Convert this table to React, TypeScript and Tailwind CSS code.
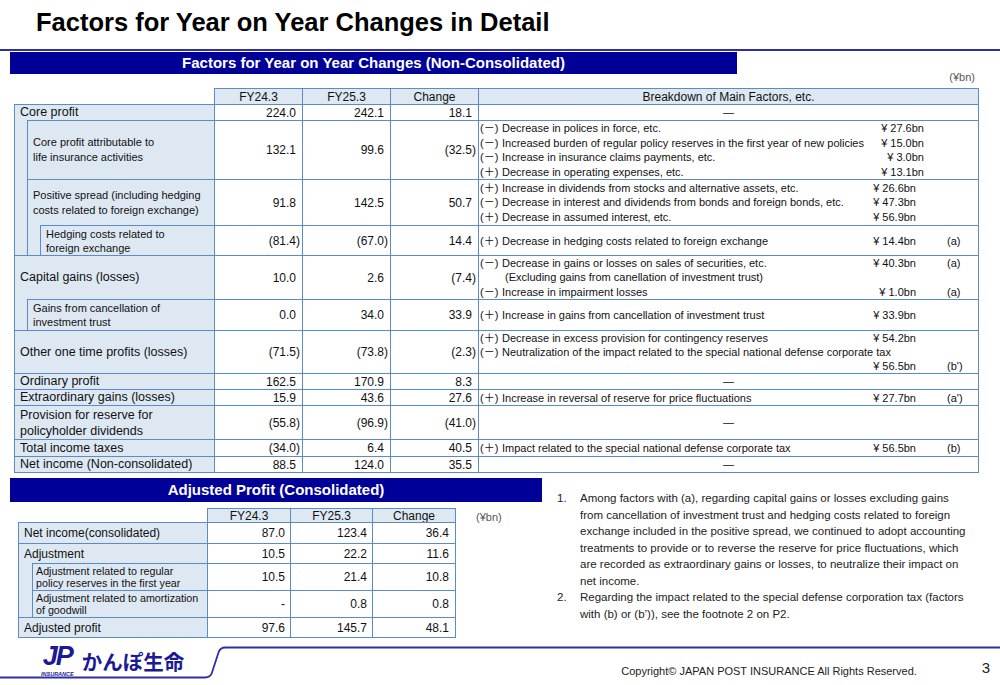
import React from "react";

type Line = { t?: string; sign?: "+" | "-"; amt?: string; mark?: string; indent?: boolean; full?: boolean };
type Row = { h: string; v: [string, string, string]; lines?: Line[]; lh?: string; last?: boolean };

const rows: Row[] = [
  { h: "h-[16px]", v: ["224.0", "242.1", "18.1"] },
  {
    h: "h-[59px]",
    v: ["132.1", "99.6", "(32.5)"],
    lh: "leading-[14.5px]",
    lines: [
      { sign: "-", t: "Decrease in polices in force, etc.", amt: "¥ 27.6bn" },
      { sign: "-", t: "Increased burden of regular policy reserves in the first year of new policies", amt: "¥ 15.0bn" },
      { sign: "-", t: "Increase in insurance claims payments, etc.", amt: "¥ 3.0bn" },
      { sign: "+", t: "Decrease in operating expenses, etc.", amt: "¥ 13.1bn" },
    ],
  },
  {
    h: "h-[46px]",
    v: ["91.8", "142.5", "50.7"],
    lh: "leading-[14.5px]",
    lines: [
      { sign: "+", t: "Increase in dividends from stocks and alternative assets, etc.", amt: "¥ 26.6bn" },
      { sign: "-", t: "Decrease in interest and dividends from bonds and foreign bonds, etc.", amt: "¥ 47.3bn" },
      { sign: "+", t: "Decrease in assumed interest, etc.", amt: "¥ 56.9bn" },
    ],
  },
  {
    h: "h-[30px]",
    v: ["(81.4)", "(67.0)", "14.4"],
    lines: [{ sign: "+", t: "Decrease in hedging costs related to foreign exchange", amt: "¥ 14.4bn", mark: "(a)" }],
  },
  {
    h: "h-[44px]",
    v: ["10.0", "2.6", "(7.4)"],
    lh: "leading-[14.5px]",
    lines: [
      { sign: "-", t: "Decrease in gains or losses on sales of securities, etc.", amt: "¥ 40.3bn", mark: "(a)" },
      { t: "(Excluding gains from canellation of investment trust)", indent: true },
      { sign: "-", t: "Increase in impairment losses", amt: "¥ 1.0bn", mark: "(a)" },
    ],
  },
  {
    h: "h-[31px]",
    v: ["0.0", "34.0", "33.9"],
    lines: [{ sign: "+", t: "Increase in gains from cancellation of investment trust", amt: "¥ 33.9bn" }],
  },
  {
    h: "h-[43px]",
    v: ["(71.5)", "(73.8)", "(2.3)"],
    lh: "leading-[14px]",
    lines: [
      { sign: "+", t: "Decrease in excess provision for contingency reserves", amt: "¥ 54.2bn" },
      { sign: "-", t: "Neutralization of the impact related to the special national defense corporate tax", full: true },
      { t: "", amt: "¥ 56.5bn", mark: "(b')" },
    ],
  },
  { h: "h-[16px]", v: ["162.5", "170.9", "8.3"] },
  {
    h: "h-[16px]",
    v: ["15.9", "43.6", "27.6"],
    lines: [{ sign: "+", t: "Increase in reversal of reserve for price fluctuations", amt: "¥ 27.7bn", mark: "(a')" }],
  },
  { h: "h-[34px]", v: ["(55.8)", "(96.9)", "(41.0)"] },
  {
    h: "h-[17px]",
    v: ["(34.0)", "6.4", "40.5"],
    lines: [{ sign: "+", t: "Impact related to the special national defense corporate tax", amt: "¥ 56.5bn", mark: "(b)" }],
  },
  { h: "h-[17px]", v: ["88.5", "124.0", "35.5"], last: true },
];

const Num = ({ v }: { v: string }) =>
  v.startsWith("(") ? (
    <>{v}</>
  ) : (
    <>
      {v}
      <span className="invisible">)</span>
    </>
  );

const Sign = ({ s }: { s?: "+" | "-" }) =>
  s ? <span className="inline-block w-[22px]">{s === "+" ? "(＋)" : "(－)"}</span> : null;

const Breakdown = ({ r }: { r: Row }) => {
  if (!r.lines) {
    return <div className="flex-1 flex items-center justify-center text-[11px]">—</div>;
  }
  return (
    <div className={`flex-1 flex flex-col justify-center pl-[1px] text-[11px] ${r.lh ?? "leading-[14px]"}`}>
      {r.lines.map((l, i) =>
        l.full ? (
          <div key={i} className="whitespace-nowrap">
            <Sign s={l.sign} />
            {l.t}
          </div>
        ) : (
          <div key={i} className="flex">
            <span className={`flex-1 min-w-0 whitespace-nowrap ${l.indent ? "pl-[25px]" : ""}`}>
              <Sign s={l.sign} />
              {l.t}
            </span>
            <span className="w-[60px] shrink-0 text-right whitespace-nowrap">{l.amt}</span>
            <span className="w-[62px] shrink-0 pl-[31px]">{l.mark}</span>
          </div>
        )
      )}
    </div>
  );
};

const bd = "border-[#5b8bc8]";
const lbg = "bg-[#dde8f3]";

const MainTable = () => (
  <div className="flex ml-[14px] mt-[4px] text-[#111]">
    {/* label column */}
    <div className="w-[200px] shrink-0">
      <div className="h-[16px]" />
      <div className={`h-[151px] border-l border-t ${bd} ${lbg} flex flex-col`}>
        <div className="h-[15px] flex items-center pl-[5px] text-[12.5px]">Core profit</div>
        <div className="flex flex-1">
          <div className="w-[12px]" />
          <div className="flex-1 flex flex-col">
            <div className={`h-[59px] border-l border-t ${bd} flex items-center pl-[5px] text-[11px] leading-[15px]`}>
              Core profit attributable to
              <br />
              life insurance activities
            </div>
            <div className={`h-[76px] border-l border-t ${bd} flex flex-col`}>
              <div className="h-[45px] flex items-center pl-[5px] text-[11px] leading-[15px]">
                Positive spread (including hedging
                <br />
                costs related to foreign exchange)
              </div>
              <div className="flex h-[30px]">
                <div className="w-[12px]" />
                <div className={`flex-1 border-l border-t ${bd} flex items-center pl-[5px] text-[11px] leading-[14px]`}>
                  Hedging costs related to
                  <br />
                  foreign exchange
                </div>
              </div>
            </div>
          </div>
        </div>
      </div>
      <div className={`h-[75px] border-l border-t ${bd} ${lbg} flex flex-col`}>
        <div className="h-[43px] flex items-center pl-[5px] text-[12.5px]">Capital gains (losses)</div>
        <div className="flex h-[31px]">
          <div className="w-[12px]" />
          <div className={`flex-1 border-l border-t ${bd} flex items-center pl-[5px] text-[11px] leading-[14px]`}>
            Gains from cancellation of
            <br />
            investment trust
          </div>
        </div>
      </div>
      <div className={`h-[43px] border-l border-t ${bd} ${lbg} flex items-center pl-[5px] text-[12.5px]`}>
        Other one time profits (losses)
      </div>
      <div className={`h-[16px] border-l border-t ${bd} ${lbg} flex items-center pl-[5px] text-[12.5px]`}>Ordinary profit</div>
      <div className={`h-[16px] border-l border-t ${bd} ${lbg} flex items-center pl-[5px] text-[12.5px]`}>
        Extraordinary gains (losses)
      </div>
      <div className={`h-[34px] border-l border-t ${bd} ${lbg} flex items-center pl-[5px] text-[12.5px] leading-[16px]`}>
        Provision for reserve for
        <br />
        policyholder dividends
      </div>
      <div className={`h-[17px] border-l border-t ${bd} ${lbg} flex items-center pl-[5px] text-[12.5px]`}>Total income taxes</div>
      <div className={`h-[17px] border-l border-t border-b ${bd} ${lbg} flex items-center pl-[5px] text-[12.5px]`}>
        Net income (Non-consolidated)
      </div>
    </div>

    {/* data columns */}
    <div className="flex flex-col">
      <div className={`flex h-[16px] ${lbg} text-[12px]`}>
        {["FY24.3", "FY25.3", "Change"].map((h) => (
          <div key={h} className={`w-[88px] border-l border-t ${bd} flex items-center justify-center`}>
            {h}
          </div>
        ))}
        <div className={`w-[501px] border-l border-t border-r ${bd} flex items-center justify-center`}>
          Breakdown of Main Factors, etc.
        </div>
      </div>
      {rows.map((r, i) => (
        <div key={i} className={`flex ${r.h}`}>
          {r.v.map((v, j) => (
            <div
              key={j}
              className={`w-[88px] border-l border-t ${r.last ? "border-b" : ""} ${bd} flex items-center justify-end pr-[2px] text-[12px]`}
            >
              <Num v={v} />
            </div>
          ))}
          <div className={`w-[501px] flex border-l border-t border-r ${r.last ? "border-b" : ""} ${bd}`}>
            <Breakdown r={r} />
          </div>
        </div>
      ))}
    </div>
  </div>
);

const adj = [
  { h: "h-[21px]", v: ["87.0", "123.4", "36.4"] },
  { h: "h-[20px]", v: ["10.5", "22.2", "11.6"] },
  { h: "h-[27px]", v: ["10.5", "21.4", "10.8"] },
  { h: "h-[27px]", v: ["-", "0.8", "0.8"] },
  { h: "h-[21px]", v: ["97.6", "145.7", "48.1"], last: true },
];

const AdjTable = () => (
  <div className="flex items-start mt-[6px] ml-[18px] text-[#111]">
    <div className="w-[189px] shrink-0">
      <div className="h-[14px]" />
      <div className={`h-[21px] border-l border-t ${bd} ${lbg} flex items-center pl-[5px] text-[12px]`}>
        Net income(consolidated)
      </div>
      <div className={`h-[74px] border-l border-t ${bd} ${lbg} flex flex-col`}>
        <div className="h-[19px] flex items-center pl-[5px] text-[12px]">Adjustment</div>
        <div className="flex flex-1">
          <div className="w-[13px]" />
          <div className="flex-1 flex flex-col">
            <div className={`h-[27px] border-l border-t ${bd} flex items-center pl-[3px] text-[10.7px] leading-[12px]`}>
              Adjustment related to regular
              <br />
              policy reserves in the first year
            </div>
            <div className={`h-[27px] border-l border-t ${bd} flex items-center pl-[3px] text-[10.7px] leading-[12px]`}>
              Adjustment related to amortization
              <br />
              of goodwill
            </div>
          </div>
        </div>
      </div>
      <div className={`h-[21px] border-l border-t border-b ${bd} ${lbg} flex items-center pl-[5px] text-[12px]`}>
        Adjusted profit
      </div>
    </div>
    <div className="flex flex-col">
      <div className={`flex h-[14px] ${lbg} text-[12px]`}>
        <div className={`w-[83px] border-l border-t ${bd} flex items-center justify-center`}>FY24.3</div>
        <div className={`w-[82px] border-l border-t ${bd} flex items-center justify-center`}>FY25.3</div>
        <div className={`w-[84px] border-l border-t border-r ${bd} flex items-center justify-center`}>Change</div>
      </div>
      {adj.map((r, i) => (
        <div key={i} className={`flex ${r.h} text-[12px]`}>
          <div className={`w-[83px] border-l border-t ${r.last ? "border-b" : ""} ${bd} flex items-center justify-end pr-[5px]`}>
            {r.v[0]}
          </div>
          <div className={`w-[82px] border-l border-t ${r.last ? "border-b" : ""} ${bd} flex items-center justify-end pr-[5px]`}>
            {r.v[1]}
          </div>
          <div
            className={`w-[84px] border-l border-t border-r ${r.last ? "border-b" : ""} ${bd} flex items-center justify-end pr-[6px]`}
          >
            {r.v[2]}
          </div>
        </div>
      ))}
    </div>
    <div className="ml-[20px] mt-[1px] text-[11px] text-[#555]">(¥bn)</div>
  </div>
);

const Notes = () => (
  <div className="ml-[15px] pt-[12px] text-[11.5px] leading-[16.5px] text-[#222]">
    <div className="flex">
      <span className="w-[23px]">1.</span>
      <span className="whitespace-nowrap">
        Among factors with (a), regarding capital gains or losses excluding gains
        <br />
        from cancellation of investment trust and hedging costs related to foreign
        <br />
        exchange included in the positive spread, we continued to adopt accounting
        <br />
        treatments to provide or to reverse the reserve for price fluctuations, which
        <br />
        are recorded as extraordinary gains or losses, to neutralize their impact on
        <br />
        net income.
      </span>
    </div>
    <div className="flex">
      <span className="w-[23px]">2.</span>
      <span className="whitespace-nowrap">
        Regarding the impact related to the special defense corporation tax (factors
        <br />
        with (b) or (b’)), see the footnote 2 on P2.
      </span>
    </div>
  </div>
);

const Footer = () => (
  <div className="relative h-[47px] flex items-start">
    <svg className="absolute inset-0" width="1000" height="47" viewBox="0 0 1000 47">
      <path
        d="M0 34.5 H205 Q210.5 34.5 212 29.5 L218.5 9.5 Q220 4.5 225.5 4.5 H1000"
        fill="none"
        stroke="#2e2ea6"
        strokeWidth="1.8"
      />
    </svg>
    <div className="relative ml-[41px] flex flex-col items-center text-[#1a1a96]">
      <span className="font-bold italic text-[27px] leading-[27px] tracking-[-2px]">JP</span>
      <span className="font-bold italic text-[5.5px] leading-[6px] mt-[1px]">INSURANCE</span>
    </div>
    <div className="relative ml-[8px] mt-[6px] font-['Noto_Sans_CJK_JP',sans-serif] font-bold text-[20.5px] leading-[24px] text-[#1a1a96]">
      かんぽ生命
    </div>
    <div className="relative ml-[437px] mt-[20px] text-[11px] text-[#222] whitespace-nowrap">
      Copyright© JAPAN POST INSURANCE All Rights Reserved.
    </div>
    <div className="relative ml-auto mr-[10px] mt-[14px] text-[15px] text-[#222]">3</div>
  </div>
);

export default function App() {
  return (
    <div className="w-[1000px] h-[685px] overflow-hidden bg-white font-['Liberation_Sans','Noto_Sans_CJK_JP',sans-serif] text-black">
      <div className="h-[49px] pt-[10px] pl-[36px] text-[25.5px] font-bold leading-[25px]">
        Factors for Year on Year Changes in Detail
      </div>
      <div className="h-[2px] bg-[#2e2ea6]" />
      <div className="flex items-start pl-[10px] pr-[25px] pt-[1px] h-[33px]">
        <div className="w-[727px] h-[22px] bg-[#000099] flex items-center justify-center text-white font-bold text-[15px]">
          Factors for Year on Year Changes (Non-Consolidated)
        </div>
        <div className="ml-auto mt-[18px] text-[11px] leading-[14px] text-[#555]">(¥bn)</div>
      </div>
      <MainTable />
      <div className="flex h-[165px] mt-[5px]">
        <div className="w-[542px] shrink-0">
          <div className="ml-[10px] w-[532px] h-[24px] bg-[#000099] flex items-center justify-center text-white font-bold text-[15px]">
            Adjusted Profit (Consolidated)
          </div>
          <AdjTable />
        </div>
        <Notes />
      </div>
      <Footer />
    </div>
  );
}
